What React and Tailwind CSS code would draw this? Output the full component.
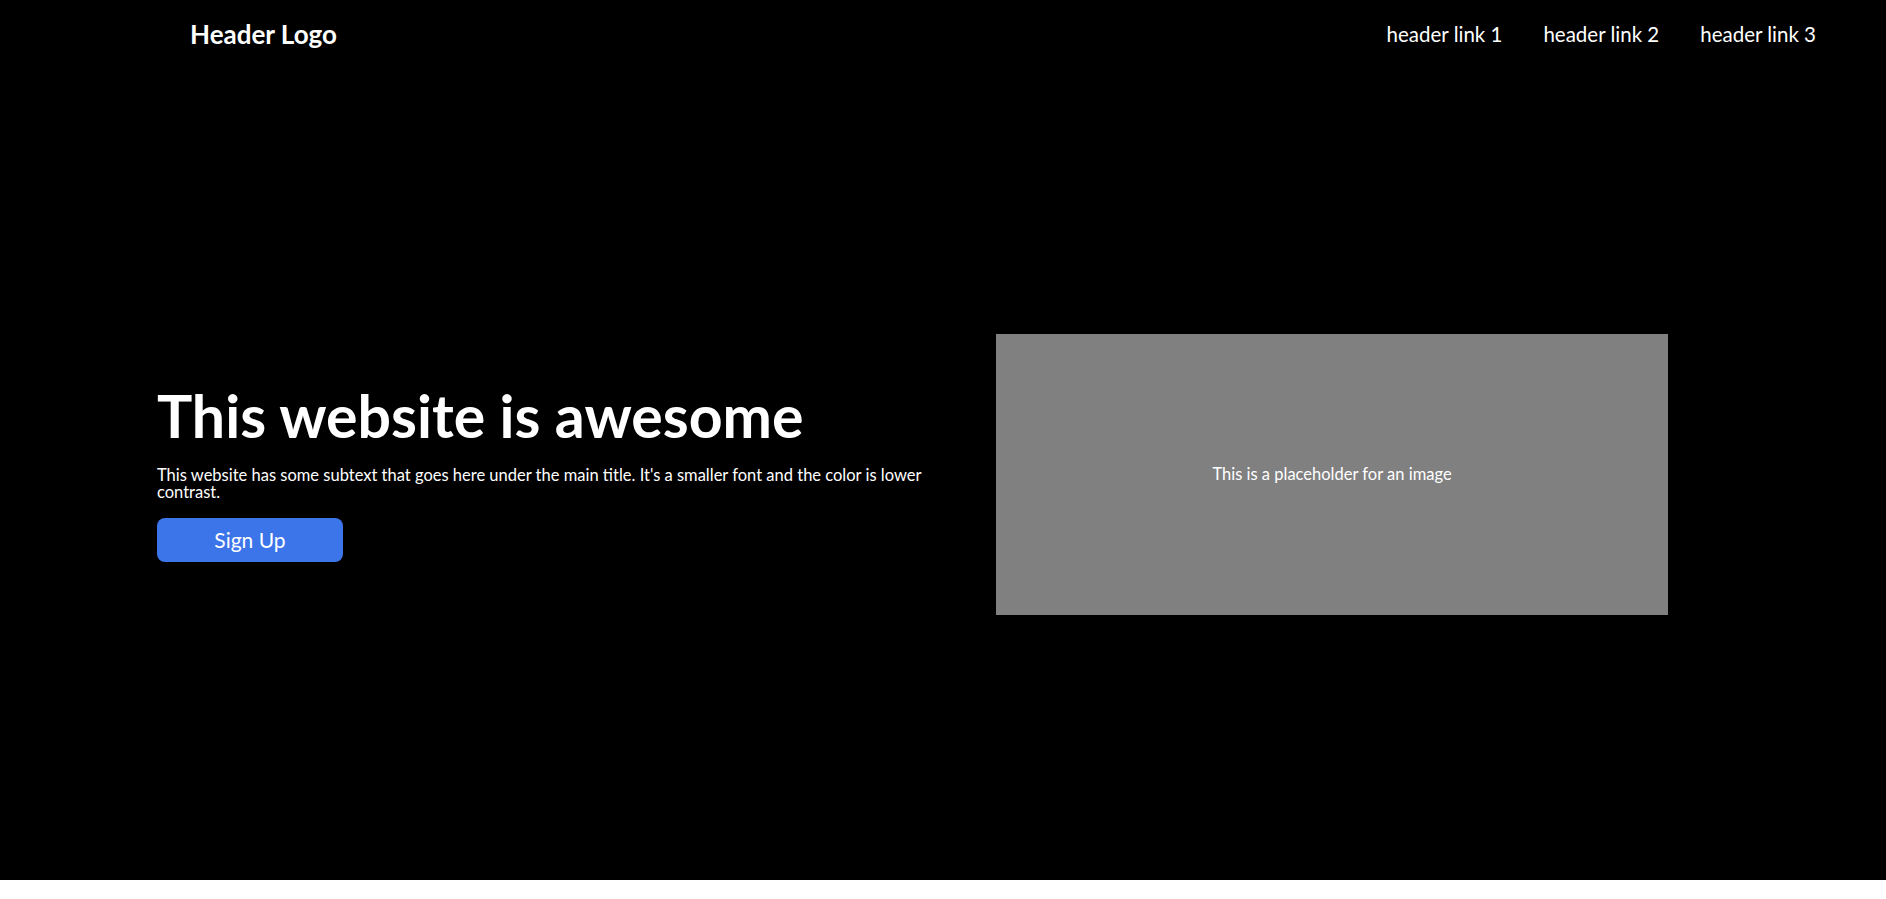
export default function App() {
  const font = { fontFamily: "Lato, 'Open Sans', sans-serif" };
  return (
    <div className="w-full bg-white">
      <div className="flex h-[880px] w-full flex-col bg-black text-white" style={font}>
        <header className="flex h-[68px] shrink-0 items-center justify-between pl-[190px] pr-[70px]">
          <div className="text-[26px] font-bold">Header Logo</div>
          <nav className="flex items-center gap-[41px] text-[20.5px]">
            <a href="#">header link 1</a>
            <a href="#">header link 2</a>
            <a href="#">header link 3</a>
          </nav>
        </header>
        <main className="flex flex-1 items-center gap-[39px] pl-[157px] pr-[218px]">
          <div className="w-[800px] shrink-0">
            <h1 className="text-[59px] font-bold leading-none">This website is awesome</h1>
            <p className="mt-[22px] text-[16.5px] leading-[17px] text-white">
              This website has some subtext that goes here under the main title. It's a smaller font and the color is lower contrast.
            </p>
            <button className="mt-[17px] flex h-[44px] w-[186px] items-center justify-center rounded-[8px] bg-[#3c74ea] text-[21px] text-white">
              Sign Up
            </button>
          </div>
          <div className="flex h-[281px] w-[672px] shrink-0 items-center justify-center bg-[#808080] text-[16.5px] text-white">
            This is a placeholder for an image
          </div>
        </main>
      </div>
    </div>
  );
}
